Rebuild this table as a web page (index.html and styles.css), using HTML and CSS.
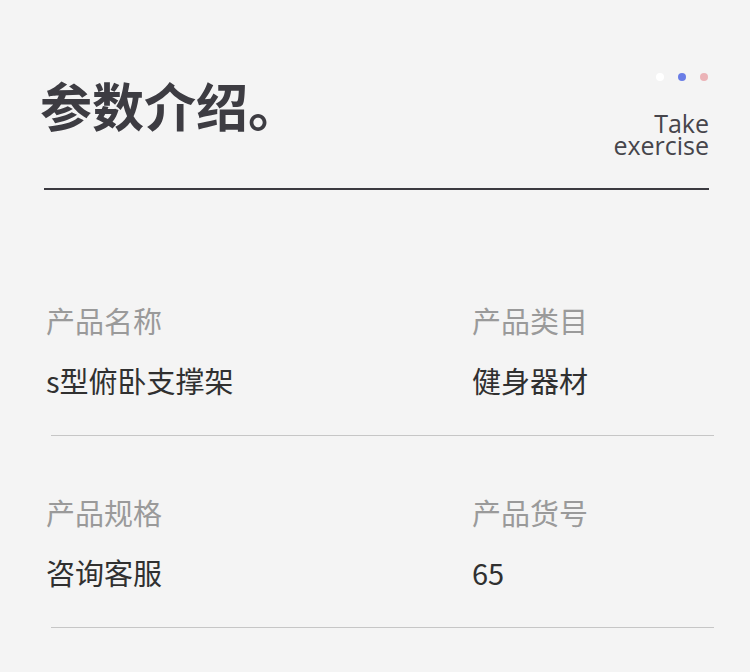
FILE: index.html
```html
<!DOCTYPE html>
<html lang="zh-CN">
<head>
<meta charset="utf-8">
<title>参数介绍</title>
<link rel="stylesheet" href="styles.css">
</head>
<body>
<div class="page">
  <header class="header">
    <h1 class="title">参数介绍。</h1>
    <div class="brand">
      <div class="dots">
        <span class="dot dot-white"></span>
        <span class="dot dot-blue"></span>
        <span class="dot dot-pink"></span>
      </div>
      <div class="tagline">Take<br>exercise</div>
    </div>
  </header>
  <section class="specs">
    <div class="row">
      <div class="cell">
        <div class="label">产品名称</div>
        <div class="value">s型俯卧支撑架</div>
      </div>
      <div class="cell">
        <div class="label">产品类目</div>
        <div class="value">健身器材</div>
      </div>
    </div>
    <div class="row">
      <div class="cell">
        <div class="label">产品规格</div>
        <div class="value">咨询客服</div>
      </div>
      <div class="cell">
        <div class="label">产品货号</div>
        <div class="value">65</div>
      </div>
    </div>
  </section>
</div>
</body>
</html>
```

FILE: styles.css
```css
html, body {
  margin: 0;
  padding: 0;
  background: #f4f4f4;
}
body {
  font-family: "Noto Sans CJK SC", "Noto Sans", sans-serif;
}
.page {
  width: 750px;
  height: 672px;
  overflow: hidden;
}
.header {
  display: flex;
  justify-content: space-between;
  align-items: flex-start;
  margin: 0 41px 0 44px;
  padding: 73px 0 32px;
  border-bottom: 2px solid #3b3a40;
}
.title {
  margin: 2px 0 0 -4px;
  font-size: 52px;
  line-height: 60px;
  font-weight: 700;
  color: #3d3c42;
}
.brand {
  display: flex;
  flex-direction: column;
  align-items: flex-end;
}
.dots {
  display: flex;
  gap: 14px;
  height: 8px;
  margin-right: 1px;
}
.dot {
  width: 8px;
  height: 8px;
  border-radius: 50%;
}
.dot-white { background: #ffffff; }
.dot-blue { background: #6a7de6; }
.dot-pink { background: #ebb3b7; }
.tagline {
  margin-top: 31px;
  font-family: "Open Sans", "Noto Sans", sans-serif;
  font-size: 25px;
  line-height: 22px;
  text-align: right;
  color: #46454b;
}
.specs {
  padding-top: 110px;
  margin: 0 36px 0 46px;
}
.row {
  display: grid;
  grid-template-columns: 426px 1fr;
  padding-top: 56px;
}
.row:first-child {
  padding-top: 0;
}
.row::after {
  content: "";
  grid-column: 1 / -1;
  height: 1px;
  margin: 35px 0 0 5px;
  background: #c6c6c6;
}
.label {
  font-size: 29px;
  line-height: 40px;
  color: #9a9a9a;
}
.value {
  margin-top: 20px;
  font-size: 29px;
  line-height: 40px;
  color: #303030;
}
```
